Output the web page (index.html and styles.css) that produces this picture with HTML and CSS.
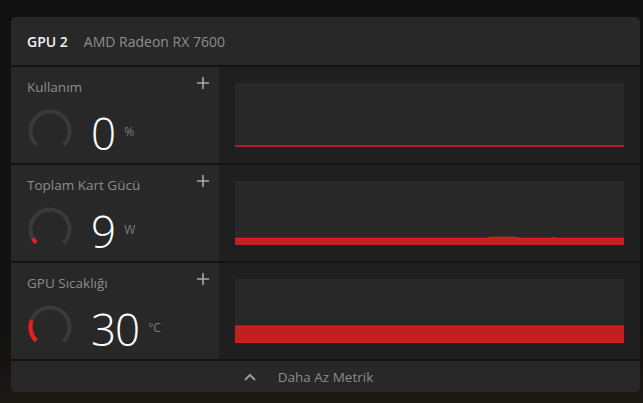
FILE: index.html
```html
<!DOCTYPE html>
<html lang="tr">
<head>
<meta charset="utf-8">
<title>GPU 2</title>
<link rel="stylesheet" href="styles.css">
</head>
<body>
<div class="card">
  <div class="header">
    <span class="gpu">GPU 2</span>
    <span class="model">AMD Radeon RX 7600</span>
  </div>

  <div class="row">
    <div class="info">
      <div class="title">Kullanım</div>
      <svg class="plus" width="12" height="12" viewBox="0 0 12 12"><path d="M6 0V12M0 6H12" stroke="#a8a8a8" stroke-width="1.6"/></svg>
      <div class="reading">
        <svg class="gauge" width="44" height="44" viewBox="0 0 44 44">
          <circle cx="22" cy="22" r="19.5" fill="none" stroke="#3a3a3a" stroke-width="4" stroke-dasharray="91.9 200" transform="rotate(135 22 22)"/>
        </svg>
        <span class="value">0</span>
        <span class="unit">%</span>
      </div>
    </div>
    <div class="chart">
      <svg class="graph" viewBox="0 0 389 64" preserveAspectRatio="none">
        <rect x="0" y="62.3" width="389" height="1.4" fill="#e81c1c"/>
      </svg>
    </div>
  </div>

  <div class="row">
    <div class="info">
      <div class="title">Toplam Kart Gücü</div>
      <svg class="plus" width="12" height="12" viewBox="0 0 12 12"><path d="M6 0V12M0 6H12" stroke="#a8a8a8" stroke-width="1.6"/></svg>
      <div class="reading">
        <svg class="gauge" width="44" height="44" viewBox="0 0 44 44">
          <circle cx="22" cy="22" r="19.5" fill="none" stroke="#3a3a3a" stroke-width="4" stroke-dasharray="91.9 200" transform="rotate(135 22 22)"/>
          <circle cx="22" cy="22" r="19.5" fill="none" stroke="#ee1c1c" stroke-width="4" stroke-dasharray="5.5 200" transform="rotate(135 22 22)"/>
        </svg>
        <span class="value">9</span>
        <span class="unit">W</span>
      </div>
    </div>
    <div class="chart">
      <svg class="graph" viewBox="0 0 389 64" preserveAspectRatio="none">
        <path d="M0 57.3H252L256 56.3H280L284 57.3H316L318 56.6L321 57.3H389V64H0Z" fill="#c21f1f"/>
        <path d="M0 57.3H252L256 56.3H280L284 57.3H316L318 56.6L321 57.3H389" fill="none" stroke="#e81e1e" stroke-width="1.2"/>
      </svg>
    </div>
  </div>

  <div class="row">
    <div class="info">
      <div class="title">GPU Sıcaklığı</div>
      <svg class="plus" width="12" height="12" viewBox="0 0 12 12"><path d="M6 0V12M0 6H12" stroke="#a8a8a8" stroke-width="1.6"/></svg>
      <div class="reading">
        <svg class="gauge" width="44" height="44" viewBox="0 0 44 44">
          <circle cx="22" cy="22" r="19.5" fill="none" stroke="#3a3a3a" stroke-width="4" stroke-dasharray="91.9 200" transform="rotate(135 22 22)"/>
          <circle cx="22" cy="22" r="19.5" fill="none" stroke="#ee1c1c" stroke-width="4" stroke-dasharray="22 200" transform="rotate(135 22 22)"/>
        </svg>
        <span class="value">30</span>
        <span class="unit">°C</span>
      </div>
    </div>
    <div class="chart">
      <svg class="graph" viewBox="0 0 389 64" preserveAspectRatio="none">
        <rect x="0" y="47" width="389" height="17" fill="#c02020"/>
        <rect x="0" y="46.6" width="389" height="1.2" fill="#e61e1e"/>
        <rect x="0" y="63" width="389" height="1" fill="#d81e1e"/>
      </svg>
    </div>
  </div>

  <div class="more">
    <svg class="chev" width="12" height="8" viewBox="0 0 12 8"><path d="M1 7L6 2L11 7" fill="none" stroke="#9a9a9a" stroke-width="2"/></svg>
    <span class="more-text">Daha Az Metrik</span>
  </div>
</div>
</body>
</html>
```

FILE: styles.css
```css
html, body {
  margin: 0;
  padding: 0;
}
body {
  width: 643px;
  height: 403px;
  box-sizing: border-box;
  padding: 17px 3px 0 11px;
  background: linear-gradient(180deg, #111111 0%, #111111 80%, #1b1814 100%);
  font-family: "Open Sans", "Noto Sans", sans-serif;
  overflow: hidden;
}
.card {
  width: 629px;
  display: flex;
  flex-direction: column;
  gap: 2px;
  background: #131313;
  border-radius: 5px;
  overflow: hidden;
}
.header {
  height: 48px;
  background: #282828;
  display: flex;
  align-items: center;
  padding-left: 16px;
  gap: 16px;
  font-size: 14px;
}
.gpu {
  color: #f2f2f2;
  font-weight: 600;
}
.model {
  color: #8e8e8e;
  font-weight: 500;
}
.row {
  height: 96px;
  display: grid;
  grid-template-columns: 208px 1fr;
}
.info {
  position: relative;
  background: #282828;
  padding: 11px 0 0 16px;
  box-sizing: border-box;
}
.title {
  color: #8c8c8c;
  font-size: 13.5px;
  font-weight: 500;
  line-height: 18px;
}
.plus {
  position: absolute;
  top: 10px;
  right: 10px;
}
.reading {
  display: flex;
  align-items: center;
  margin-top: 13px;
  height: 44px;
}
.gauge {
  margin-left: 1px;
  flex: none;
}
.value {
  margin-left: 19px;
  color: #ffffff;
  font-size: 44px;
  font-weight: 300;
  line-height: 44px;
  padding-top: 3px;
  letter-spacing: -1px;
}
.unit {
  margin-left: 9px;
  color: #7c7c7c;
  font-size: 12px;
}
.chart {
  background: #1f1f1f;
  padding: 16px;
}
.graph {
  display: block;
  width: 100%;
  height: 64px;
  background: #282828;
}
.more {
  height: 31px;
  background: #282828;
  display: flex;
  align-items: center;
  justify-content: center;
  gap: 22px;
  padding-right: 34px;
}
.chev {
  flex: none;
}
.more-text {
  color: #8c8c8c;
  font-size: 13.5px;
  font-weight: 500;
}
```
